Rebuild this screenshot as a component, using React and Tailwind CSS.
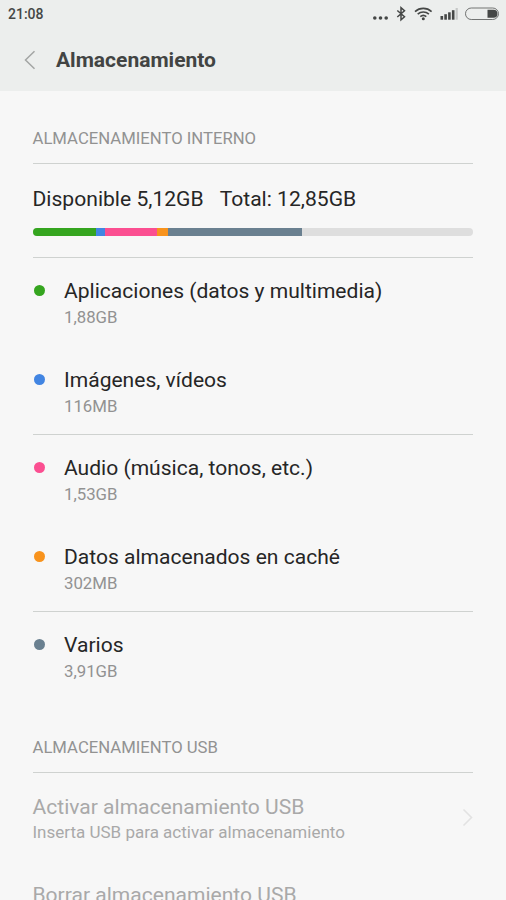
const categories = [
  { name: "Aplicaciones (datos y multimedia)", size: "1,88GB", dot: "bg-[#35a51f]", row: "h-[88px] pt-5" },
  { name: "Imágenes, vídeos", size: "116MB", dot: "bg-[#4285e2]", row: "h-[89px] pt-[21px] border-b" },
  { name: "Audio (música, tonos, etc.)", size: "1,53GB", dot: "bg-[#fb4f91]", row: "h-[88px] pt-5" },
  { name: "Datos almacenados en caché", size: "302MB", dot: "bg-[#f8931d]", row: "h-[89px] pt-[21px] border-b" },
  { name: "Varios", size: "3,91GB", dot: "bg-[#6a8090]", row: "h-[88px] pt-5" },
];

function StatusBar() {
  return (
    <div className="flex h-7 items-center justify-between pl-2 pr-[7px] text-[#454746]">
      <span className="text-[14px] font-medium">21:08</span>
      <svg width="127" height="18" viewBox="372 5 127 18" fill="none">
        <g fill="#454746">
          <circle cx="374.8" cy="18" r="1.8" />
          <circle cx="380.5" cy="18" r="1.8" />
          <circle cx="386.2" cy="18" r="1.8" />
        </g>
        <path d="M397.3 10.5l7.2 6.3-3.5 3V7.7l3.5 3-7.2 6.3" stroke="#454746" strokeWidth="1.5" />
        <g stroke="#454746" strokeWidth="1.6">
          <path d="M415 11.6a12.4 12.4 0 0 1 16.6 0" />
          <path d="M417.7 14.2a8.4 8.4 0 0 1 11.2 0" />
          <path d="M420.3 16.7a4.6 4.6 0 0 1 6 0" />
        </g>
        <circle cx="423.3" cy="18.8" r="1.5" fill="#454746" />
        <g fill="#454746">
          <rect x="440.5" y="16" width="2.6" height="3.7" />
          <rect x="444.3" y="14.2" width="2.6" height="5.5" />
          <rect x="448.1" y="12.3" width="2.6" height="7.4" />
          <rect x="451.9" y="10.2" width="2.6" height="9.5" />
        </g>
        <rect x="455.6" y="8" width="2.2" height="11.7" fill="#c6c8c7" />
        <rect x="465.5" y="8" width="33" height="11.5" rx="5.75" stroke="#727473" />
        <path d="M487.5 9.8h6a4 4 0 0 1 0 8h-6z" fill="#454746" />
      </svg>
    </div>
  );
}

function Header() {
  return (
    <header className="h-[91px] bg-[#eceeed]">
      <StatusBar />
      <div className="flex h-16 items-center gap-5 pl-6">
        <svg width="12" height="20" viewBox="0 0 12 20" fill="none" stroke="#a3a5a4" strokeWidth="1.5">
          <path d="M10.5 1.2L1.5 10l9 8.8" />
        </svg>
        <h1 className="pt-0.5 text-[21px] font-bold text-[#424443]">Almacenamiento</h1>
      </div>
    </header>
  );
}

function UsageBar() {
  return (
    <div className="flex h-2 overflow-hidden rounded-full bg-[#dedede]">
      <div className="w-[63.5px] bg-[#35a51f]" />
      <div className="w-[9px] bg-[#4285e2]" />
      <div className="w-[52px] bg-[#fb4f91]" />
      <div className="w-[10.5px] bg-[#f8931d]" />
      <div className="w-[134px] bg-[#6a8090]" />
    </div>
  );
}

function SectionTitle({ children }) {
  return (
    <h2 className="border-b border-[#cfd2d0] pb-[13px] text-[16.7px] leading-[22px] text-[#929292]">
      {children}
    </h2>
  );
}

function CategoryRow({ item }) {
  return (
    <li className={`flex border-[#cfd2d0] ${item.row}`}>
      <span className={`ml-px mt-[7px] size-[11px] rounded-full ${item.dot}`} />
      <div className="ml-[19.5px]">
        <p className="text-[21.05px] leading-[26px] text-[#262626]">{item.name}</p>
        <p className="text-[16.8px] leading-[26px] text-[#929292]">{item.size}</p>
      </div>
    </li>
  );
}

export default function App() {
  return (
    <div className="h-[900px] w-[506px] overflow-hidden bg-[#f7f7f7] font-['Roboto',sans-serif]">
      <Header />
      <main className="pl-[32.5px] pr-[33px]">
        <section className="pt-[37px]">
          <SectionTitle>ALMACENAMIENTO INTERNO</SectionTitle>
          <div className="h-[94px] border-b border-[#cfd2d0] pt-[22px]">
            <p className="mb-4 flex gap-4 text-[21.1px] leading-[26px] text-[#262626]">
              <span>Disponible 5,12GB</span>
              <span>Total: 12,85GB</span>
            </p>
            <UsageBar />
          </div>
          <ul>
            {categories.map((item) => (
              <CategoryRow key={item.name} item={item} />
            ))}
          </ul>
        </section>

        <section className="pt-[37px]">
          <SectionTitle>ALMACENAMIENTO USB</SectionTitle>
          <div className="flex h-[88px] justify-between pt-[21px] text-[#a9a9a9]">
            <div>
              <p className="text-[21.05px] leading-[26px]">Activar almacenamiento USB</p>
              <p className="text-[17px] leading-[25px]">Inserta USB para activar almacenamiento</p>
            </div>
            <svg className="mt-[14px]" width="11" height="20" viewBox="0 0 11 20" fill="none" stroke="#e2e2e2" strokeWidth="1.6">
              <path d="M1.5 1.5l8 8-8 8" />
            </svg>
          </div>
          <p className="pt-[21px] text-[21.05px] leading-[26px] text-[#a9a9a9]">Borrar almacenamiento USB</p>
        </section>
      </main>
    </div>
  );
}
